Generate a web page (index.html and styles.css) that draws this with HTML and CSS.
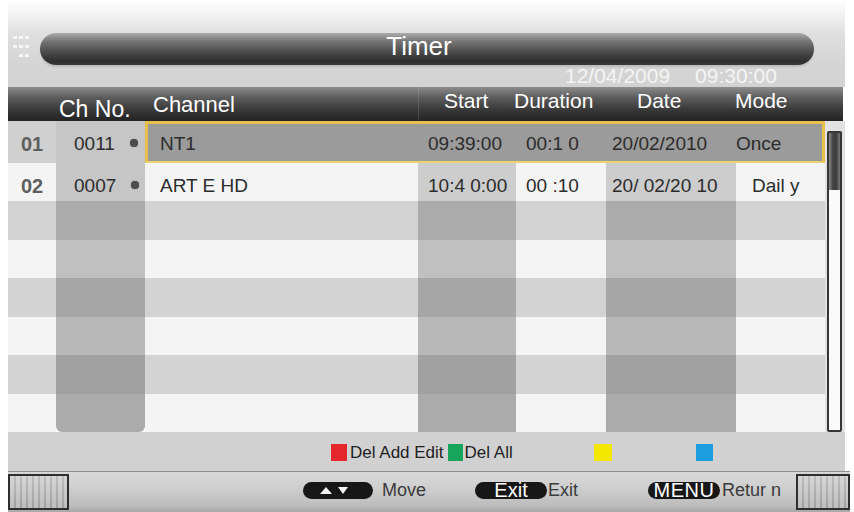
FILE: index.html
```html
<!DOCTYPE html>
<html>
<head>
<meta charset="utf-8">
<title>Timer</title>
<link rel="stylesheet" href="styles.css">
</head>
<body>
<div class="screen">
  <div class="top">
    <div class="titlerow">
      <div class="grip">
        <svg width="26" height="28" viewBox="0 0 26 28">
          <g fill="#ffffff" opacity="0.75">
            <rect x="3" y="3" width="4" height="3"/><rect x="9" y="3" width="4" height="3"/><rect x="15" y="3" width="4" height="3"/>
            <rect x="3" y="12" width="4" height="3"/><rect x="9" y="12" width="4" height="3"/><rect x="15" y="12" width="4" height="3"/>
            <rect x="9" y="21" width="4" height="3"/><rect x="15" y="21" width="4" height="3"/>
          </g>
        </svg>
      </div>
      <div class="titlebar">Timer</div>
    </div>
    <div class="clock"><span>12/04/2009</span><span class="time">09:30:00</span></div>
  </div>

  <div class="thead">
    <span></span>
    <span class="h-ch">Ch No.</span>
    <span class="h-name">Channel</span>
    <span class="h-start">Start</span>
    <span class="h-dur">Duration</span>
    <span class="h-date">Date</span>
    <span class="h-mode">Mode</span>
    <span></span>
  </div>

  <div class="tbody">
    <div class="rows">
      <div class="row sel">
        <div class="idx">01</div>
        <div class="chno sh"><span>0011</span><span class="dot"></span></div>
        <div class="name">NT1</div>
        <div class="start sh">09:39:00</div>
        <div class="dur">00:1 0</div>
        <div class="date sh">20/02/2010</div>
        <div class="mode">Once</div>
      </div>
      <div class="row lt r2">
        <div class="idx">02</div>
        <div class="chno sh"><span>0007</span><span class="dot"></span></div>
        <div class="name">ART E HD</div>
        <div class="start sh">10:4 0:00</div>
        <div class="dur">00 :10</div>
        <div class="date sh">20/ 02/20 10</div>
        <div class="mode dy">Dail y</div>
      </div>
      <div class="row dk r3"><div class="idx"></div><div class="chno sh"></div><div class="name"></div><div class="start sh"></div><div class="dur"></div><div class="date sh"></div><div class="mode"></div></div>
      <div class="row lt r4"><div class="idx"></div><div class="chno sh"></div><div class="name"></div><div class="start sh"></div><div class="dur"></div><div class="date sh"></div><div class="mode"></div></div>
      <div class="row dk r5"><div class="idx"></div><div class="chno sh"></div><div class="name"></div><div class="start sh"></div><div class="dur"></div><div class="date sh"></div><div class="mode"></div></div>
      <div class="row lt r6"><div class="idx"></div><div class="chno sh"></div><div class="name"></div><div class="start sh"></div><div class="dur"></div><div class="date sh"></div><div class="mode"></div></div>
      <div class="row dk r7"><div class="idx"></div><div class="chno sh"></div><div class="name"></div><div class="start sh"></div><div class="dur"></div><div class="date sh"></div><div class="mode"></div></div>
      <div class="row lt r8"><div class="idx"></div><div class="chno sh"></div><div class="name"></div><div class="start sh"></div><div class="dur"></div><div class="date sh"></div><div class="mode"></div></div>
    </div>
    <div class="scroll">
      <div class="track"><div class="thumb"></div></div>
    </div>
  </div>

  <div class="legend">
    <span class="sq red"></span><span class="ltxt">Del Add Edit</span>
    <span class="sq green"></span><span class="ltxt2">Del All</span>
    <span class="sq yellow"></span>
    <span class="sq blue"></span>
  </div>

  <div class="footer">
    <div class="fbox"></div>
    <div class="pill arrows">
      <svg width="34" height="9" viewBox="0 0 34 9">
        <polygon points="2,8 8,1 14,8" fill="#f2f2f2"/>
        <polygon points="20,1 30,1 25,8" fill="#f2f2f2"/>
      </svg>
    </div>
    <span class="ftxt move">Move</span>
    <div class="pill exitpill">Exit</div>
    <span class="ftxt exit">Exit</span>
    <div class="pill menupill">MENU</div>
    <span class="ftxt ret">Retur n</span>
    <div class="fbox right"></div>
  </div>
</div>
</body>
</html>
```

FILE: styles.css
```css
html, body {
  margin: 0;
  padding: 0;
}

body {
  background: #ffffff;
  font-family: "Liberation Sans", Arial, sans-serif;
  width: 854px;
  height: 512px;
  overflow: hidden;
}

.screen {
  display: flex;
  flex-direction: column;
  width: 854px;
  height: 512px;
}

/* ---------- top / title ---------- */
.top {
  height: 87px;
  margin-left: 8px;
  width: 837px;
  background: linear-gradient(#ffffff 0, #f1f1f1 16px, #dfdfdf 34px, #d6d6d6 60px, #d2d2d2 87px);
  display: flex;
  flex-direction: column;
}

.titlerow {
  display: flex;
  margin-top: 33px;
  height: 32px;
}

.grip {
  width: 32px;
  height: 32px;
  display: flex;
  align-items: flex-start;
  padding-left: 2px;
  box-sizing: border-box;
}

.titlebar {
  width: 774px;
  height: 32px;
  border-radius: 16px;
  background: linear-gradient(#ababab 0, #777777 25%, #4a4a4a 60%, #2f2f2f 88%, #3a3a3a 100%);
  box-shadow: 0 2px 2px rgba(0, 0, 0, 0.12);
  color: #ffffff;
  font-size: 26px;
  line-height: 27px;
  text-align: center;
  padding-right: 16px;
  box-sizing: border-box;
}

.clock {
  height: 22px;
  line-height: 22px;
  font-size: 21px;
  color: #f4f4f4;
  padding-left: 557px;
  white-space: nowrap;
}

.clock .time {
  margin-left: 25px;
}

/* ---------- table header ---------- */
.thead {
  height: 34px;
  margin-left: 8px;
  width: 835px;
  display: grid;
  grid-template-columns: 48px 89px 273px 98px 90px 130px 89px 18px;
  background: linear-gradient(#8c8c8c 0, #5e5e5e 30%, #3a3a3a 65%, #232323 100%);
  color: #ffffff;
  font-size: 21px;
  line-height: 24px;
  white-space: nowrap;
}

.thead span {
  padding-top: 2px;
}

.thead .h-ch {
  font-size: 23px;
  padding-top: 10px;
  padding-left: 3px;
}

.thead .h-name {
  font-size: 22px;
  padding-top: 6px;
  padding-left: 8px;
}

.thead .h-start {
  padding-left: 26px;
  box-shadow: inset 1px 0 0 rgba(255, 255, 255, 0.12);
}

.thead .h-dur {
  margin-left: -2px;
}

.thead .h-date {
  padding-left: 31px;
}

.thead .h-mode {
  margin-left: -1px;
}

/* ---------- table body ---------- */
.tbody {
  display: flex;
  margin-left: 8px;
  height: 311px;
}

.rows {
  width: 817px;
  display: flex;
  flex-direction: column;
}

.row {
  display: grid;
  grid-template-columns: 48px 89px 273px 98px 90px 130px 89px;
  height: 38.43px;
  font-size: 19px;
  line-height: 22px;
  color: #2c2c2c;
}

.row.sel {
  height: 42px;
}

.row > div {
  padding-top: 12px;
  box-sizing: border-box;
  white-space: nowrap;
}

.row .idx {
  font-weight: bold;
  font-size: 20px;
  color: #5f5f5f;
  padding-left: 13px;
}

.row .chno {
  display: flex;
  align-items: flex-start;
  padding-left: 18px;
}

.row .dot {
  width: 8px;
  height: 8px;
  border-radius: 50%;
  background: #4c4c4c;
  box-shadow: 0 0 1px #555555;
  margin-left: 15px;
  margin-top: 6px;
}

.row .name { padding-left: 15px; }
.row .start { padding-left: 10px; }
.row .dur { padding-left: 10px; }
.row .date { padding-left: 6px; }
.row .mode { padding-left: 0; }
.row .mode.dy { padding-left: 16px; }

/* light and dark stripes */
.row.lt > div { background: #f4f4f4; }
.row.dk > div { background: #d3d3d3; }

.row.r2 > .sh { background: #cdcdcd; }
.row.r2 > .chno { background: #c6c6c6; }
.row.r3 > .sh { background: #ababab; }
.row.r4 > .sh { background: #c0c0c0; }
.row.r5 > .sh { background: #a6a6a6; }
.row.r6 > .sh { background: #b8b8b8; }
.row.r7 > .sh { background: #a1a1a1; }
.row.r8 > .sh { background: #ababab; }
.row.r8 > .chno { border-radius: 0 0 6px 6px; }

/* selected row */
.row.sel > .idx { background: #d0d0d0; }
.row.sel > .chno { background: #c6c6c6; }

.row.sel > .name,
.row.sel > .start,
.row.sel > .dur,
.row.sel > .date,
.row.sel > .mode {
  background: #9b9b9b;
  border-top: 3px solid #e6c04a;
  border-bottom: 2px solid #ebd36e;
  padding-top: 9px;
}

.row.sel > .name {
  border-left: 3px solid #e6c04a;
  padding-left: 12px;
}

.row.sel > .mode {
  border-right: 3px solid #e6c04a;
}

/* scrollbar */
.scroll {
  width: 20px;
  background: #e2e2e2;
}

.track {
  margin: 10px 0 0 2px;
  width: 15px;
  height: 301px;
  border: 2px solid #363636;
  border-radius: 2px;
  box-sizing: border-box;
  background: #fafafa;
}

.thumb {
  height: 57px;
  background: linear-gradient(90deg, #8a8a8a 0, #444444 35%, #3c3c3c 65%, #7a7a7a 100%);
}

/* ---------- legend ---------- */
.legend {
  height: 39px;
  margin-left: 8px;
  width: 837px;
  background: #d1d1d1;
  display: flex;
  align-items: center;
  font-size: 17px;
  color: #1e1e1e;
  white-space: nowrap;
  padding-top: 2px;
  box-sizing: border-box;
}

.sq {
  display: block;
  width: 16px;
  height: 17px;
}

.sq.red { background: #e6272c; margin-left: 323px; }
.ltxt { margin-left: 3px; }
.sq.green { background: #17a55b; margin-left: 4px; width: 15px; }
.ltxt2 { margin-left: 2px; }
.sq.yellow { background: #f4e800; margin-left: 81px; width: 18px; }
.sq.blue { background: #1b9de0; margin-left: 84px; width: 17px; }

/* ---------- footer ---------- */
.footer {
  height: 41px;
  margin-left: 8px;
  width: 842px;
  box-sizing: border-box;
  border-top: 1px solid #8f8f8f;
  background: linear-gradient(#d9d9d9 0, #cdcdcd 45%, #bcbcbc 85%, #a9a9a9 100%);
  display: flex;
  align-items: center;
  font-size: 18px;
  color: #3a3a3a;
  white-space: nowrap;
}

.fbox {
  width: 61px;
  height: 36px;
  border: 2px solid #2e2e2e;
  box-sizing: border-box;
  background:
    linear-gradient(rgba(255, 255, 255, 0.25), rgba(0, 0, 0, 0.05)),
    repeating-linear-gradient(90deg, #c8c8c8 0 4px, #a8a8a8 4px 6px);
}

.fbox.right {
  width: 54px;
  margin-left: auto;
}

.pill {
  height: 17px;
  border-radius: 9px;
  background: #171717;
  color: #ffffff;
  display: flex;
  align-items: center;
  justify-content: center;
  font-size: 20px;
  line-height: 17px;
  margin-top: -3px;
}

.pill.arrows {
  width: 70px;
  margin-left: 234px;
}

.pill.arrows svg {
  display: block;
  margin-left: -6px;
}

.ftxt {
  margin-top: -4px;
}

.move { margin-left: 9px; }

.pill.exitpill {
  width: 72px;
  margin-left: 49px;
}

.exit { margin-left: 1px; }

.pill.menupill {
  width: 72px;
  margin-left: 70px;
  letter-spacing: 0.5px;
}

.ret { margin-left: 2px; }
```
